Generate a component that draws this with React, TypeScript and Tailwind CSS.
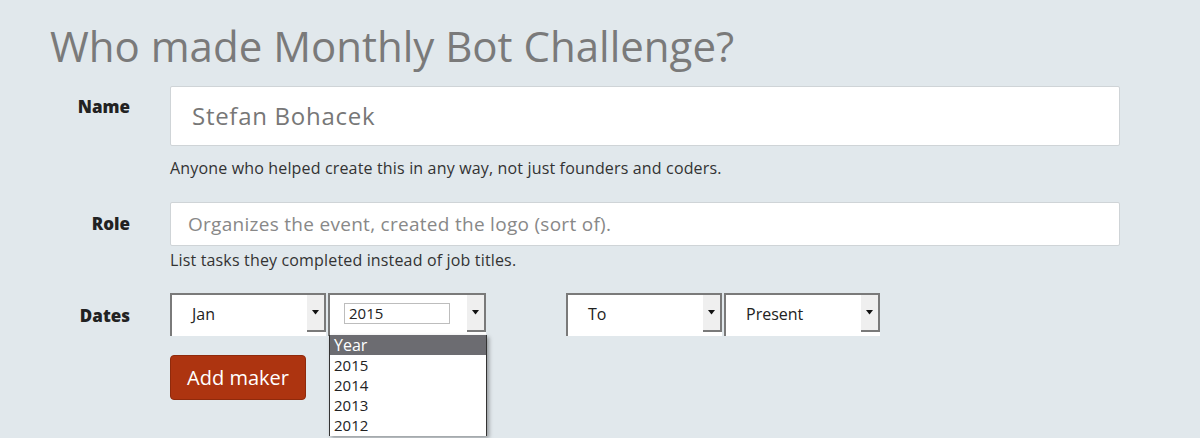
const font = { fontFamily: "'Open Sans', 'Noto Sans', sans-serif" };

function Arrow() {
  return (
    <div className="flex h-[37px] w-[19px] items-center justify-center border-r-2 border-b-2 border-[#7a7a7a] bg-[#efefef]">
      <svg width="7" height="5" viewBox="0 0 7 5">
        <path d="M0 0 L7 0 L3.5 4.5 Z" fill="#111" />
      </svg>
    </div>
  );
}

function Select({ label, boxed, width }: { label: string; boxed?: boolean; width: string }) {
  return (
    <div className={`${width} flex h-[43px] border-t-2 border-l-2 border-[#7a7a7a] bg-white`}>
      <div className="flex flex-1 items-center pb-[4px] pl-[14px]">
        {boxed ? (
          <div className="flex h-[21px] w-[106px] items-center border border-[#bdbdbd] px-[4px] text-[15px] text-[#222]">
            {label}
          </div>
        ) : (
          <span className="pl-[6px] text-[16px] text-[#222]">{label}</span>
        )}
      </div>
      <Arrow />
    </div>
  );
}

export default function App() {
  return (
    <div className="relative h-[438px] w-[1200px] overflow-hidden bg-[#e1e8ec]" style={font}>
      <h1 className="pl-[50px] pt-[21px] text-[42px] leading-[50px] font-normal text-[#7a7a7a]">
        Who made Monthly Bot Challenge?
      </h1>

      <div className="mt-[15px] grid grid-cols-[80px_950px] gap-x-[40px] pl-[50px]">
        <div className="pt-[9px] text-right text-[17px] leading-[24px] font-extrabold text-[#222]">Name</div>
        <div>
          <div className="flex h-[60px] items-center rounded-[2px] border border-[#cfd4d7] bg-white pl-[21px] text-[24px] tracking-[0.03em] text-[#777]">
            Stefan Bohacek
          </div>
          <p className="mt-[10px] text-[16px] leading-[24px] tracking-[0.01em] text-[#333]">
            Anyone who helped create this in any way, not just founders and coders.
          </p>
        </div>

        <div className="mt-[22px] pt-[10px] text-right text-[17px] leading-[24px] font-extrabold text-[#222]">Role</div>
        <div className="mt-[22px]">
          <div className="flex h-[44px] items-center rounded-[2px] border border-[#cfd4d7] bg-white pl-[17px] text-[19px] tracking-[0.015em] text-[#888]">
            Organizes the event, created the logo (sort of).
          </div>
          <p className="mt-[2px] text-[16px] leading-[24px] tracking-[0.01em] text-[#333]">
            List tasks they completed instead of job titles.
          </p>
        </div>

        <div className="mt-[21px] pt-[11px] text-right text-[17px] leading-[24px] font-extrabold text-[#222]">Dates</div>
        <div className="mt-[21px]">
          <div className="flex items-start">
            <Select label="Jan" width="w-[156px]" />
            <div className="relative ml-[2px]">
              <Select label="2015" boxed width="w-[158px]" />
              <div className="absolute left-[1px] top-[42px] z-10 w-[158px] border-x border-[#333] bg-white text-[15px] leading-[20px] text-[#222] shadow-[2px_2px_4px_rgba(0,0,0,0.35)]">
                <div className="bg-[#6c6c71] pl-[4px] text-[16px] text-white">Year</div>
                <div className="pl-[4px]">2015</div>
                <div className="pl-[4px]">2014</div>
                <div className="pl-[4px]">2013</div>
                <div className="h-[21px] pl-[4px]">2012</div>
              </div>
            </div>
            <div className="ml-[80px] flex gap-[2px]">
              <Select label="To" width="w-[156px]" />
              <Select label="Present" width="w-[156px]" />
            </div>
          </div>
          <button className="mt-[19px] h-[45px] w-[136px] rounded-[4px] border border-[#8f2a0c] bg-[#ad3410] text-[20px] text-white">
            Add maker
          </button>
        </div>
      </div>
    </div>
  );
}
